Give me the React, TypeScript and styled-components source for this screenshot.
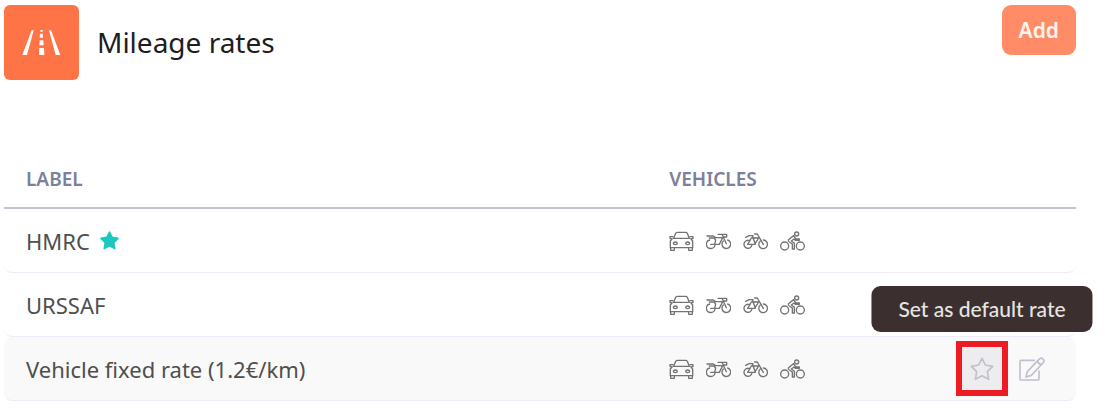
import React from "react";
import styled, { createGlobalStyle } from "styled-components";

const GlobalStyle = createGlobalStyle`
  *, *::before, *::after { box-sizing: border-box; }
  body {
    margin: 0;
    background: #ffffff;
    color: #4f4f4f;
    font-family: "Noto Sans", "Open Sans", sans-serif;
  }
`;

const Page = styled.main`
  padding: 5px 40px 14px 4px;
`;

const Header = styled.header`
  display: flex;
  align-items: flex-start;
  justify-content: space-between;
  margin-bottom: 70px;
`;

const Heading = styled.div`
  display: flex;
  align-items: center;
  gap: 18px;
`;

const Tile = styled.div`
  display: flex;
  width: 75px;
  height: 75px;
  border-radius: 6px;
  background: #ff7446;
  overflow: hidden;
`;

const Title = styled.h1`
  margin: 0;
  padding-bottom: 2px;
  color: #1d1d1f;
  font-size: 28px;
  font-weight: 400;
  line-height: 36px;
`;

const AddButton = styled.button`
  height: 50px;
  padding: 0 17px;
  border: 0;
  border-radius: 9px;
  background: #ff8c67;
  color: #fff4f0;
  font: 600 21px/28px "Noto Sans", sans-serif;
  cursor: pointer;
`;

const Table = styled.table`
  width: 100%;
  table-layout: fixed;
  border-collapse: separate;
  border-spacing: 0;
`;

const HeadCell = styled.th<{ $width?: string }>`
  width: ${(p) => p.$width ?? "auto"};
  height: 59px;
  padding: 0 22px;
  border-bottom: 2px solid #c2c0d2;
  color: #7d7f9c;
  font-size: 19px;
  font-weight: 600;
  line-height: 24px;
  text-align: left;
  text-transform: uppercase;
`;

const Row = styled.tr<{ $active?: boolean }>`
  background: transparent;

  td {
    height: 64px;
    border-bottom: 1px solid #ededf8;
    background: ${(p) => (p.$active ? "#f9f9f9" : "#ffffff")};
  }
  td:first-child {
    border-radius: ${(p) => (p.$active ? "8px 0 0 8px" : "0 0 0 8px")};
  }
  td:last-child {
    border-radius: ${(p) => (p.$active ? "0 8px 8px 0" : "0 0 8px 0")};
  }
`;

const Cell = styled.td`
  padding: 0 22px;
  font-size: 22px;
  line-height: 28px;
`;

const ActionCell = styled.td`
  padding: 0 31px 0 0;
`;

const RateLabel = styled.span`
  display: flex;
  align-items: center;
  gap: 10px;
`;

const Vehicles = styled.div`
  display: flex;
  gap: 12px;
`;

const Actions = styled.div`
  display: flex;
  align-items: center;
  justify-content: flex-end;
  gap: 11px;
`;

const IconButton = styled.button<{ $highlighted?: boolean }>`
  position: relative;
  display: flex;
  align-items: center;
  justify-content: center;
  width: ${(p) => (p.$highlighted ? "52px" : "26px")};
  height: 55px;
  padding: 0;
  border: ${(p) => (p.$highlighted ? "6px solid #ed1c24" : "0")};
  background: ${(p) => (p.$highlighted ? "#ededef" : "transparent")};
  color: #c1c0cd;
  cursor: pointer;
`;

const Tooltip = styled.span`
  position: absolute;
  bottom: calc(100% + 15px);
  left: 50%;
  padding: 9px 27px;
  border-radius: 9px;
  background: #3b302f;
  color: #e6e4e3;
  font: 500 21px/28px Lato, sans-serif;
  white-space: nowrap;
  transform: translateX(-50%);
`;

const VehicleSvg = styled.svg`
  display: block;
  width: 25px;
  height: 20px;
  fill: none;
  stroke: #737373;
  stroke-width: 4;
  stroke-linejoin: round;
  stroke-linecap: round;
`;

type Vehicle = "Car" | "Motorcycle" | "Bicycle" | "Cyclist";

const shapes: Record<Vehicle, React.ReactNode> = {
  Car: (
    <>
      <path d="M14 22L20 7Q22 4 25 4H50Q53 4 55 7L61 22M12 22H63" />
      <path d="M12 17H3V22L9 24L4 30V50H71V30L66 24L72 22V17H63" />
      <path d="M5 50V58H16V50M59 50V58H70V50" />
      <ellipse cx="19" cy="37" rx="6" ry="4" />
      <ellipse cx="56" cy="37" rx="6" ry="4" />
    </>
  ),
  Motorcycle: (
    <>
      <path d="M11 27A13 13 0 1 0 27 42M52 30A13 13 0 1 0 65 27" />
      <path d="M3 15H22L29 20H49M14 40H40L50 20M10 21H24L29 27L26 40M36 10H48L61 38M48 10H62V18H53" />
    </>
  ),
  Bicycle: (
    <>
      <path d="M20 29A12 12 0 1 0 27 41M52 30A13 13 0 1 0 61 27" />
      <path d="M14 40L25 21H47L35 40H14M8 19L18 14H30M28 14L37 40M35 9H43L61 40" />
    </>
  ),
  Cyclist: (
    <>
      <circle cx="14" cy="45" r="12" />
      <circle cx="61" cy="45" r="12" />
      <circle cx="50" cy="9" r="6" />
      <path d="M40 14L25 27Q24 31 28 33L37 39V54M40 14L48 24H58V28H46L42 24L34 30L43 37V54H37" />
    </>
  ),
};

const vehicles: Vehicle[] = ["Car", "Motorcycle", "Bicycle", "Cyclist"];

const starPath =
  "M36 3L46 23L68 27L52 43L56 66L36 55L16 66L20 43L4 27L26 23Z";

const RoadIcon = () => (
  <svg viewBox="0 0 225 225" width="75" height="75" fill="#fff" aria-hidden="true">
    <path d="M83 76h6L69 150H55ZM135 76h6L169 150H155ZM109 75h7v5h-7ZM108 86h8l1 12h-10ZM107 106h11l1 15h-13ZM106 129h14l1 21h-16Z" />
  </svg>
);

const DefaultStar = () => (
  <svg viewBox="0 0 72 70" width="19" height="19" role="img" aria-label="Default rate">
    <path d={starPath} fill="#1cc8c0" stroke="#1cc8c0" strokeWidth="6" strokeLinejoin="round" />
  </svg>
);

const StarIcon = () => (
  <svg viewBox="0 0 72 70" width="24" height="24" fill="none" stroke="currentColor" strokeWidth="5" strokeLinejoin="round" aria-hidden="true">
    <path d={starPath} />
  </svg>
);

const EditIcon = () => (
  <svg viewBox="0 0 78 72" width="26" height="24" fill="none" stroke="currentColor" strokeWidth="5" strokeLinejoin="round" strokeLinecap="round" aria-hidden="true">
    <path d="M46 10H7Q3 10 3 14V65Q3 69 7 69H56Q60 69 60 65V42" />
    <path d="M21 60L25 44L60 7Q67 0 72 6Q78 12 72 18L37 55ZM56 12Q58 22 67 22" />
  </svg>
);

interface Rate {
  label: string;
  isDefault?: boolean;
  active?: boolean;
}

const rates: Rate[] = [
  { label: "HMRC", isDefault: true },
  { label: "URSSAF" },
  { label: "Vehicle fixed rate (1.2€/km)", active: true },
];

const RateRow = ({ label, isDefault, active }: Rate) => (
  <Row $active={active}>
    <Cell>
      <RateLabel>
        {label}
        {isDefault && <DefaultStar />}
      </RateLabel>
    </Cell>
    <Cell>
      <Vehicles>
        {vehicles.map((name) => (
          <VehicleSvg key={name} viewBox="0 0 75 60" role="img" aria-label={name}>
            {shapes[name]}
          </VehicleSvg>
        ))}
      </Vehicles>
    </Cell>
    <ActionCell>
      {active && (
        <Actions>
          <IconButton $highlighted aria-describedby="default-tip" aria-label="Set as default rate">
            <StarIcon />
            <Tooltip role="tooltip" id="default-tip">Set as default rate</Tooltip>
          </IconButton>
          <IconButton aria-label="Edit rate">
            <EditIcon />
          </IconButton>
        </Actions>
      )}
    </ActionCell>
  </Row>
);

export default function App() {
  return (
    <Page>
      <GlobalStyle />
      <Header>
        <Heading>
          <Tile>
            <RoadIcon />
          </Tile>
          <Title>Mileage rates</Title>
        </Heading>
        <AddButton>Add</AddButton>
      </Header>
      <Table>
        <thead>
          <tr>
            <HeadCell $width="60%">Label</HeadCell>
            <HeadCell>Vehicles</HeadCell>
            <HeadCell aria-label="Actions" />
          </tr>
        </thead>
        <tbody>
          {rates.map((rate) => (
            <RateRow key={rate.label} {...rate} />
          ))}
        </tbody>
      </Table>
    </Page>
  );
}
